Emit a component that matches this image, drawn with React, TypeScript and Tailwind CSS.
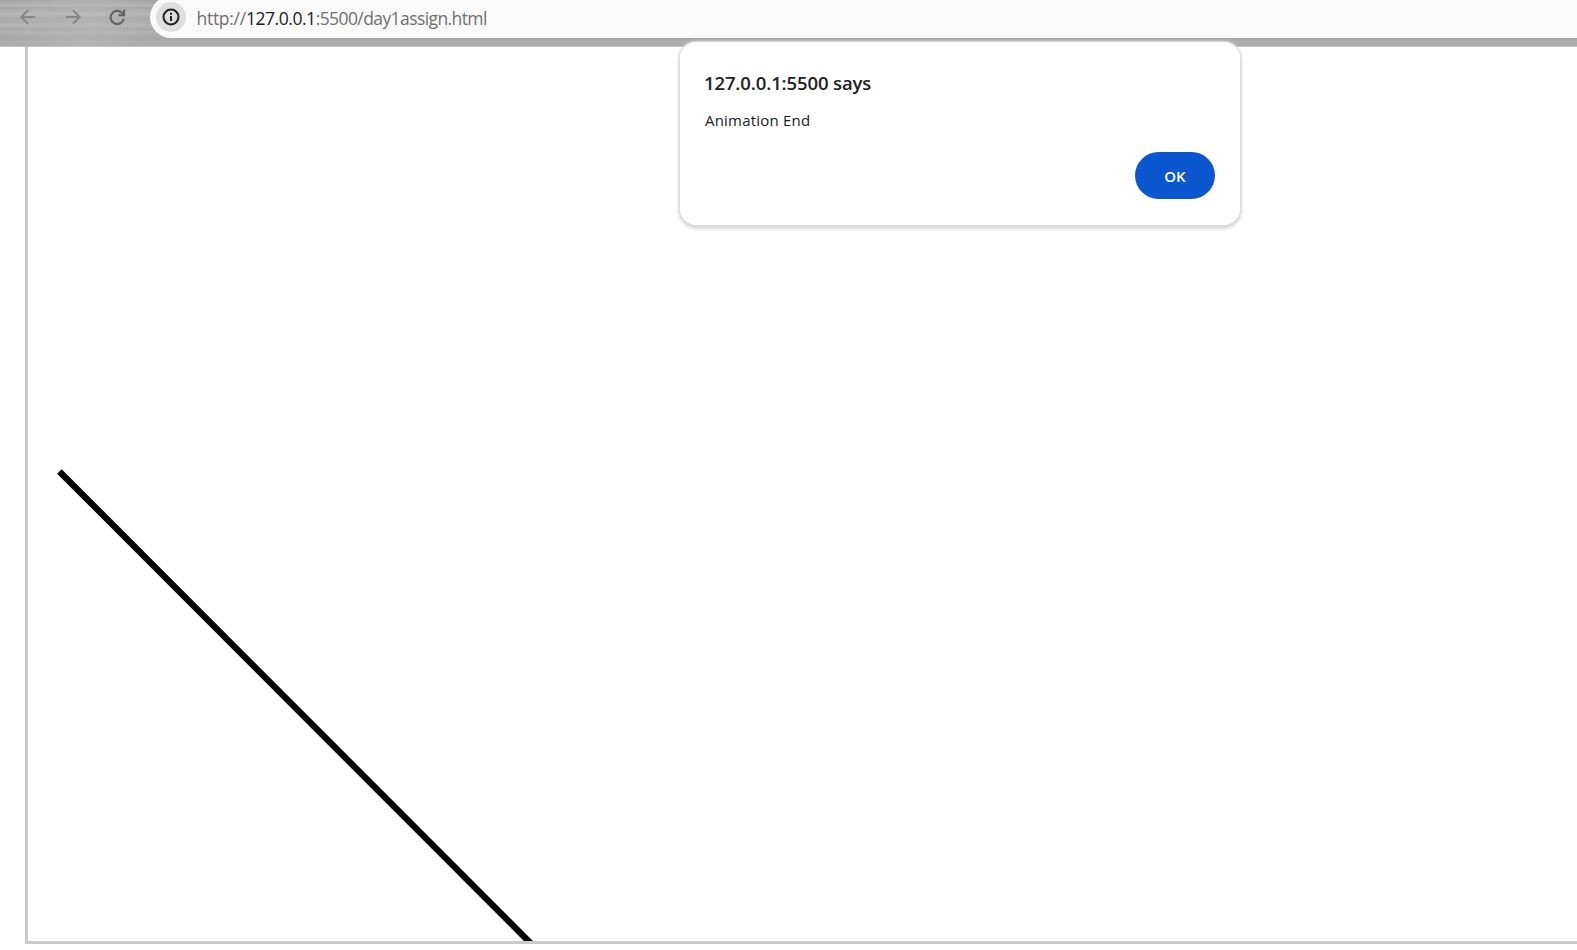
import React from 'react';

function BackIcon() {
  return (
    <svg width="16" height="16" viewBox="0 0 16 16" fill="none" stroke="#868686" strokeWidth="1.9">
      <path d="M15 8H2M8 1.2L1.3 8L8 14.8" />
    </svg>
  );
}

function ForwardIcon() {
  return (
    <svg width="16" height="16" viewBox="0 0 16 16" fill="none" stroke="#868686" strokeWidth="1.9">
      <path d="M1 8H14M8 1.2L14.7 8L8 14.8" />
    </svg>
  );
}

function ReloadIcon() {
  return (
    <svg width="17" height="17" viewBox="0 0 17 17" fill="none" stroke="#656565" strokeWidth="2.2">
      <path d="M14.7 9.6A6.6 6.6 0 1 1 12.9 3.8L14.6 5.5" />
      <path d="M15.1 0.5V6.2H9.4" />
    </svg>
  );
}

function InfoIcon() {
  return (
    <svg width="18" height="18" viewBox="0 0 18 18" fill="none" stroke="#202124" strokeWidth="2">
      <circle cx="9" cy="9" r="7.5" />
      <path d="M9 8V13M9 4.8V6.8" />
    </svg>
  );
}

function Toolbar() {
  return (
    <header className="flex h-[47px] items-start border-b border-[#c0c0c0] bg-[#acacac] bg-[linear-gradient(90deg,#acacac00_0px,#c0c0c066_90px,#acacac00_150px),linear-gradient(180deg,#a4a4a4_0px,#aaaaaa_3px,#b3b3b3_5px,#a6a6a6_8px,#b0b0b0_12px,#b7b7b7_14px,#a9a9a9_18px,#adadad_23px,#b5b5b5_25px,#a8a8a8_29px,#b2b2b2_32px,#a9a9a9_36px,#a7a7a7_40px,#b0b0b0_42px,#a8a8a8_44px,#b0b0b0_46px)]">
      <nav className="flex w-[150px] items-center gap-[28.5px] pt-[8.5px] pl-5">
        <BackIcon />
        <ForwardIcon />
        <ReloadIcon />
      </nav>
      <div className="-mt-1 flex h-[42px] flex-1 items-center rounded-l-[21px] bg-[#fafafa] pl-1.5">
        <span className="flex size-[30px] items-center justify-center rounded-full bg-[#dedede]">
          <InfoIcon />
        </span>
        <span className="pl-[10.5px] pt-px font-['Open_Sans',sans-serif] text-[17.5px] leading-6 tracking-[-0.28px] whitespace-nowrap text-[#707070]">
          http://<span className="tracking-[-0.45px] text-[#202124]">127.0.0.1</span>
          <span className="tracking-[-0.59px]">:5500/day1assign.html</span>
        </span>
      </div>
    </header>
  );
}

function AlertDialog() {
  return (
    <div
      role="alertdialog"
      className="absolute top-[42px] left-[680px] flex h-[183px] w-[560px] flex-col rounded-[16px] bg-white px-[25px] pt-[29px] font-['Open_Sans',sans-serif] text-[#202124] shadow-[0_0_2px_1px_#dedede,0_2px_4px_1px_#cccccc]"
    >
      <h1 className="-ml-px text-[18.5px] leading-6 font-semibold tracking-[-0.12px]">127.0.0.1:5500 says</h1>
      <p className="mt-[15px] text-[15px] leading-5 tracking-[0.2px]">Animation End</p>
      <button className="mt-[22px] h-[47px] w-20 self-end rounded-full bg-[#0b57d0] pt-px text-[15px] font-semibold text-white">
        OK
      </button>
    </div>
  );
}

export default function App() {
  return (
    <div className="relative flex h-[950px] w-[1577px] flex-col overflow-hidden bg-white">
      <Toolbar />
      <main className="ml-[25px] h-[897px] border-b-[3px] border-l-[3px] border-[#cacaca]">
        <svg width="1549" height="894" viewBox="28 47 1549 894" className="block">
          <line x1="59.4" y1="471.4" x2="534.4" y2="947" stroke="#000" strokeWidth="6.4" />
        </svg>
      </main>
      <AlertDialog />
    </div>
  );
}
